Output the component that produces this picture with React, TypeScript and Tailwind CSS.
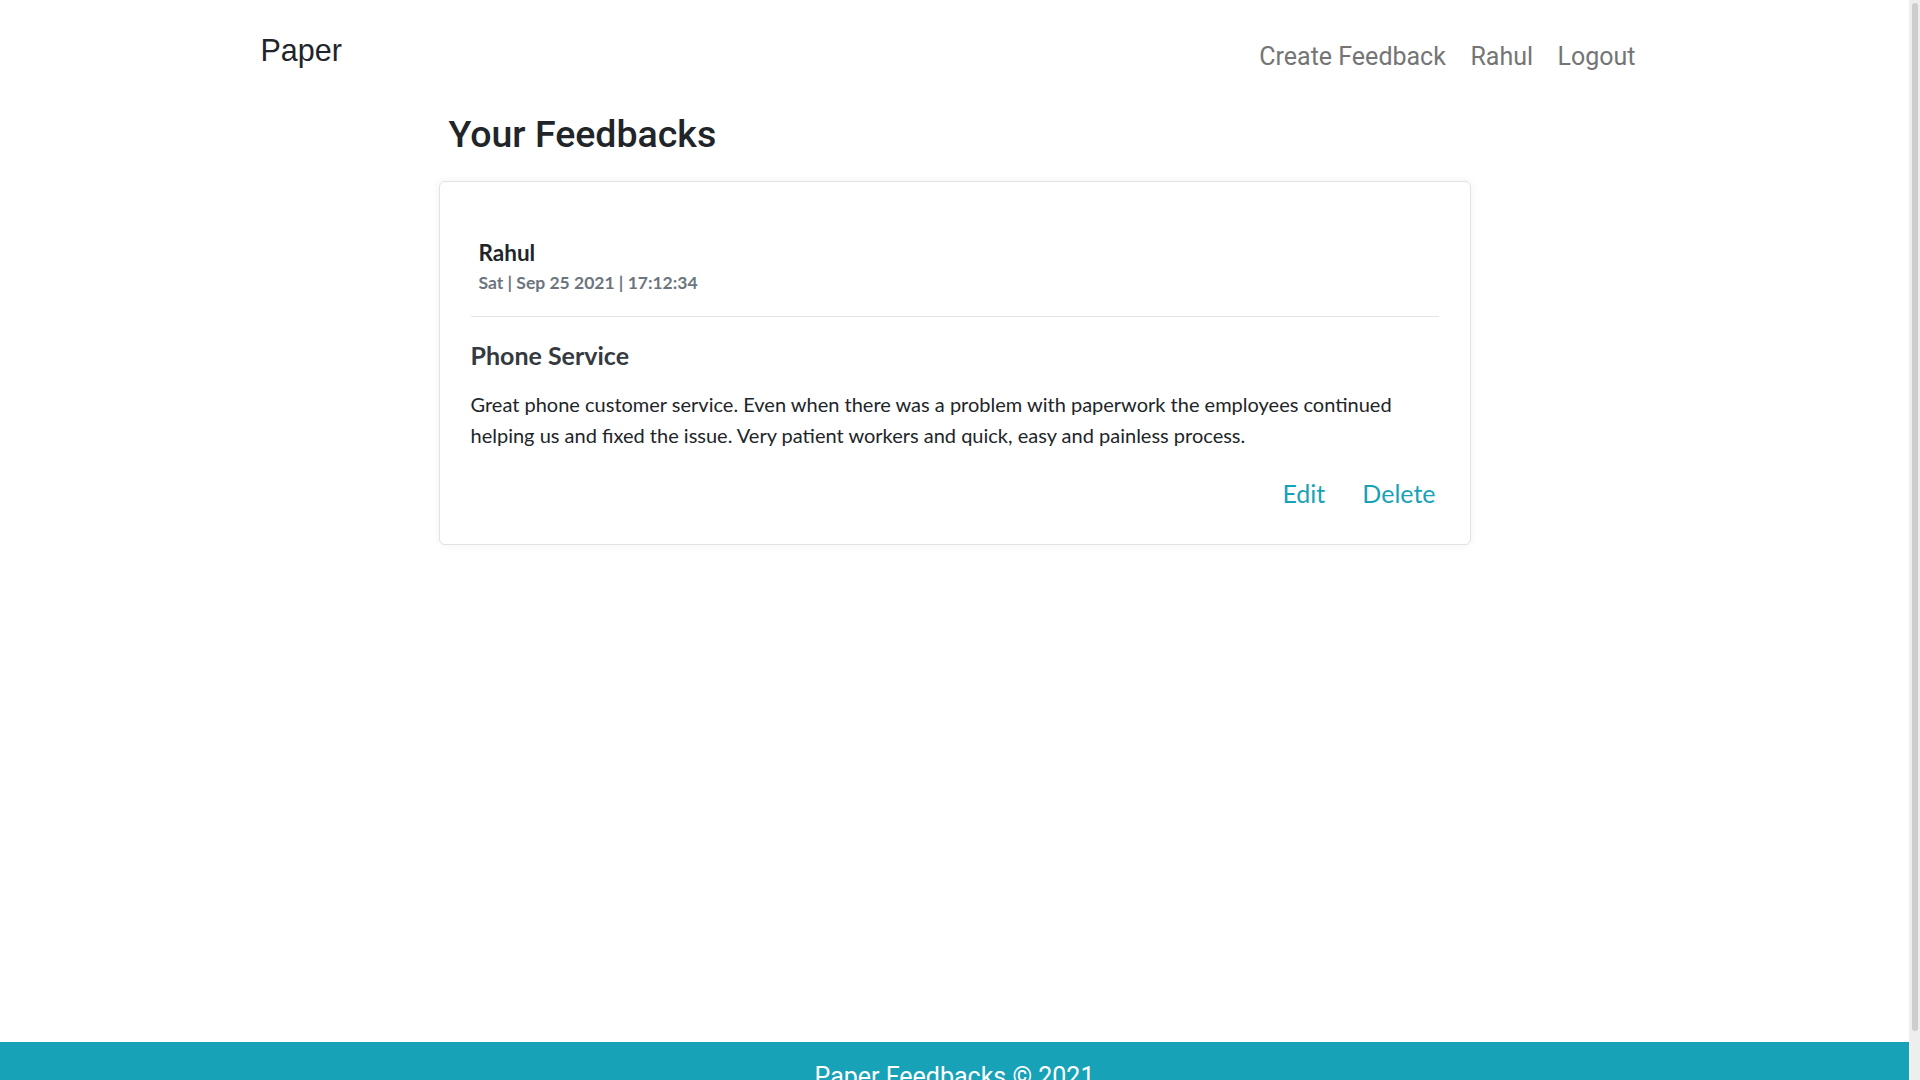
import React from 'react';

const feedbacks = [
  {
    id: 1,
    author: 'Rahul',
    date: 'Sat | Sep 25 2021 | 17:12:34',
    title: 'Phone Service',
    body: 'Great phone customer service. Even when there was a problem with paperwork the employees continued helping us and fixed the issue. Very patient workers and quick, easy and painless process.',
  },
];

const FeedbackCard = ({ item }: { item: (typeof feedbacks)[number] }) => (
  <div className="rounded-[6px] border border-[#e2e2e2] bg-white px-[31px] pt-[57px] pb-[32px] shadow-[0_0_10px_rgba(0,0,0,0.06)]">
    <div className="pl-[8px]">
      <h4 className="text-[22.5px] leading-[1.2] font-bold text-[#212529]">{item.author}</h4>
      <p className="mt-[4px] text-[17.5px] leading-[1.5] font-bold text-[#6c757d]">{item.date}</p>
    </div>
    <hr className="mt-[20px] border-[#e5e5e5]" />
    <h5 className="mt-[23px] text-[25px] leading-[1.2] font-bold text-[#343a40]">{item.title}</h5>
    <p className="mt-[19px] text-[20px] leading-[31px] text-[#212529]">{item.body}</p>
    <div className="mt-[24px] flex justify-end gap-[37px] pr-[3px] text-[25px] leading-[1.5] text-[#17a2b8]">
      <button className="cursor-pointer">Edit</button>
      <button className="cursor-pointer">Delete</button>
    </div>
  </div>
);

export default function App() {
  return (
    <div className="flex h-screen overflow-hidden bg-white font-['Lato','Liberation_Sans',sans-serif]">
      <div className="flex-1 overflow-hidden">
        <div className="min-h-[1042px]">
          {/* Navbar */}
          <header className="mx-auto flex w-[1384px] items-start justify-between">
            <a href="#" className="mt-[28px] ml-[-2px] font-['Liberation_Sans',Arial,sans-serif] text-[30.5px] leading-[1.5] text-[#212529]">
              Paper
            </a>
            <nav className="mt-[38px] flex gap-[24.5px] pr-[11px] font-['Roboto',sans-serif] text-[25px] leading-[1.5] text-[#757575]">
              <a href="#">Create Feedback</a>
              <a href="#">Rahul</a>
              <a href="#">Logout</a>
            </nav>
          </header>

          <main className="mx-auto w-[1032px] pt-[36px]">
            <h1 className="pl-[10px] font-['Roboto',sans-serif] text-[37.5px] leading-[1.2] font-medium text-[#212529]">
              Your Feedbacks
            </h1>
            <div className="mt-[24px] flex flex-col gap-6">
              {feedbacks.map((f) => (
                <FeedbackCard key={f.id} item={f} />
              ))}
            </div>
          </main>
        </div>

        <footer className="bg-[#17a2b8] pt-4 pb-9 text-center font-['Roboto',sans-serif] text-[25px] leading-[1.5] text-white">
          Paper Feedbacks © 2021
        </footer>
      </div>

      {/* page scrollbar */}
      <div className="w-[11px] shrink-0 bg-[#eeeeee] pt-[3px]">
        <div className="mx-auto h-[1028px] w-[6px] rounded-full bg-[#cdcdcd]" />
      </div>
    </div>
  );
}
